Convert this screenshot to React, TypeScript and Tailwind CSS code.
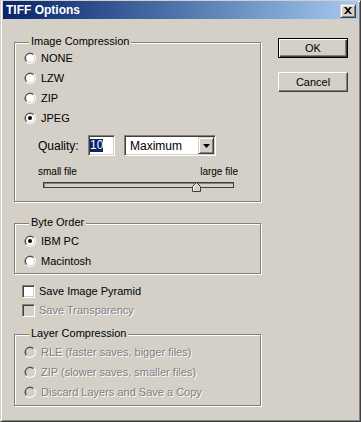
import { ReactNode } from 'react';

interface RadioProps {
    label: string;
    checked?: boolean;
    disabled?: boolean;
}

function RadioDot({ checked, disabled }: { checked?: boolean; disabled?: boolean }) {
    return (
        <svg width="12" height="12" viewBox="0 0 12 12" className="shrink-0">
            <circle cx="6" cy="6" r="6" fill="#ffffff" />
            <path d="M1.76 10.24 A6 6 0 0 1 10.24 1.76 Z" fill="#808080" />
            <circle cx="6" cy="6" r="5" fill="#d4d0c8" />
            <path d="M2.46 9.54 A5 5 0 0 1 9.54 2.46 Z" fill="#404040" />
            <circle cx="6" cy="6" r="4" fill={disabled ? '#d4d0c8' : '#ffffff'} />
            {checked && <circle cx="6" cy="6" r="2" fill="#000000" />}
        </svg>
    );
}

function Radio({ label, checked, disabled }: RadioProps) {
    return (
        <div className="flex h-[20px] items-center pl-[9px]">
            <RadioDot checked={checked} disabled={disabled} />
            <span
                className={
                    disabled
                        ? 'ml-[5px] leading-[13px] text-[#808080] [text-shadow:1px_1px_0_#fff]'
                        : 'ml-[5px] leading-[13px] text-black'
                }
            >
                {label}
            </span>
        </div>
    );
}

function Checkbox({ label, disabled }: { label: string; disabled?: boolean }) {
    return (
        <div className="flex h-[19px] items-center pl-[8px]">
            <div
                className={
                    disabled
                        ? 'h-[13px] w-[13px] shrink-0 border border-t-[#808080] border-l-[#808080] border-r-white border-b-white bg-[#d4d0c8] shadow-[inset_1px_1px_0_#404040,inset_-1px_-1px_0_#d4d0c8]'
                        : 'h-[13px] w-[13px] shrink-0 border border-t-[#808080] border-l-[#808080] border-r-white border-b-white bg-white shadow-[inset_1px_1px_0_#404040,inset_-1px_-1px_0_#d4d0c8]'
                }
            />
            <span
                className={
                    disabled
                        ? 'ml-[4px] leading-[13px] text-[#808080] [text-shadow:1px_1px_0_#fff]'
                        : 'ml-[4px] leading-[13px] text-black'
                }
            >
                {label}
            </span>
        </div>
    );
}

function GroupBox({ title, className, children }: { title: string; className: string; children: ReactNode }) {
    return (
        <div className={`relative border border-[#808080] shadow-[inset_1px_1px_0_#fff,1px_1px_0_#fff] ${className}`}>
            <span className="absolute left-[14px] -top-[8px] bg-[#d4d0c8] px-[2px] leading-[13px]">{title}</span>
            {children}
        </div>
    );
}

function App() {
    return (
        <div className="h-[422px] w-[361px] overflow-hidden border-t border-l border-r border-b border-t-[#d4d0c8] border-l-[#d4d0c8] border-r-[#404040] border-b-[#404040] bg-[#d4d0c8] font-['Liberation_Sans',Arial,sans-serif] text-[11px] text-black shadow-[inset_1px_1px_0_#fff,inset_-1px_-1px_0_#808080]">
            {/* title bar */}
            <div className="mx-[2px] flex h-[18px] items-center bg-linear-to-r from-[#0a246a] to-[#a6caf0]">
                <span className="flex-1 pl-[3px] text-[12px] font-bold leading-[18px] text-white">TIFF Options</span>
                <div className="mr-[2px] mt-[1px] flex h-[14px] w-[16px] items-center justify-center border border-t-[#d4d0c8] border-l-[#d4d0c8] border-r-[#404040] border-b-[#404040] bg-[#d4d0c8] shadow-[inset_1px_1px_0_#fff,inset_-1px_-1px_0_#808080]">
                    <svg width="8" height="7" viewBox="0 0 8 7">
                        <path d="M0 0 H2 L4 2 L6 0 H8 L5 3.5 L8 7 H6 L4 5 L2 7 H0 L3 3.5 Z" fill="#000" />
                    </svg>
                </div>
            </div>

            <div className="flex">
                {/* left column */}
                <div className="ml-[13px] mt-[23px] w-[248px]">
                    <GroupBox title="Image Compression" className="h-[160px] w-[247px] pt-[5px]">
                        <Radio label="NONE" />
                        <Radio label="LZW" />
                        <Radio label="ZIP" />
                        <Radio label="JPEG" checked />
                        <div className="mt-[7px] flex h-[21px] items-center pl-[23px] text-[12px]">
                            <span className="w-[50px] leading-[14px]">Quality:</span>
                            <div className="flex h-[21px] w-[27px] items-center border border-t-[#808080] border-l-[#808080] border-r-white border-b-white bg-white pl-[1px] shadow-[inset_1px_1px_0_#404040,inset_-1px_-1px_0_#d4d0c8]">
                                <span className="bg-[#0a246a] leading-[13px] text-white">10</span>
                            </div>
                            <div className="ml-[9px] flex h-[21px] w-[92px] items-center border border-t-[#808080] border-l-[#808080] border-r-white border-b-white bg-white shadow-[inset_1px_1px_0_#404040,inset_-1px_-1px_0_#d4d0c8]">
                                <span className="flex-1 pl-[5px] leading-[14px]">Maximum</span>
                                <div className="mr-[1px] flex h-[17px] w-[16px] items-center justify-center border border-t-[#d4d0c8] border-l-[#d4d0c8] border-r-[#404040] border-b-[#404040] bg-[#d4d0c8] shadow-[inset_1px_1px_0_#fff,inset_-1px_-1px_0_#808080]">
                                    <svg width="7" height="4" viewBox="0 0 7 4">
                                        <path d="M0 0 H7 L3.5 4 Z" fill="#000" />
                                    </svg>
                                </div>
                            </div>
                        </div>
                        <div className="mt-[10px] flex h-[12px] items-center justify-between pl-[23px] pr-[22px] text-[10px] leading-[12px]">
                            <span>small file</span>
                            <span>large file</span>
                        </div>
                        <div className="relative ml-[28px] mt-[4px] h-[6px] w-[191px] border border-t-[#404040] border-l-[#404040] border-r-[#404040] border-b-[#404040] bg-[#d4d0c8] shadow-[inset_1px_1px_0_#808080]">
                            <svg width="9" height="10" viewBox="0 0 9 10" className="absolute left-[148px] -top-[1px]">
                                <path d="M4.5 0.5 L8.5 4.5 V9.5 H0.5 V4.5 Z" fill="#d4d0c8" stroke="#404040" strokeWidth="1" />
                                <path d="M1.5 5 L4.5 2 M1.5 5 V8.5" stroke="#ffffff" strokeWidth="1" fill="none" />
                            </svg>
                        </div>
                    </GroupBox>

                    <GroupBox title="Byte Order" className="mt-[21px] h-[51px] w-[247px] pt-[7px]">
                        <Radio label="IBM PC" checked />
                        <Radio label="Macintosh" />
                    </GroupBox>

                    <div className="mt-[8px]">
                        <Checkbox label="Save Image Pyramid" />
                        <Checkbox label="Save Transparency" disabled />
                    </div>

                    <GroupBox title="Layer Compression" className="mt-[14px] h-[72px] w-[247px] pt-[7px]">
                        <Radio label="RLE (faster saves, bigger files)" disabled />
                        <Radio label="ZIP (slower saves, smaller files)" disabled />
                        <Radio label="Discard Layers and Save a Copy" disabled />
                    </GroupBox>
                </div>

                {/* right column */}
                <div className="ml-[16px] mt-[19px] flex w-[70px] flex-col">
                    <button className="flex h-[20px] w-[70px] items-center justify-center border border-black bg-[#d4d0c8] leading-[13px] shadow-[inset_1px_1px_0_#fff,inset_-1px_-1px_0_#404040,inset_-2px_-2px_0_#808080]">
                        OK
                    </button>
                    <button className="mt-[14px] flex h-[20px] w-[70px] items-center justify-center border border-t-white border-l-white border-r-[#404040] border-b-[#404040] bg-[#d4d0c8] leading-[13px] shadow-[inset_-1px_-1px_0_#808080]">
                        Cancel
                    </button>
                </div>
            </div>
        </div>
    );
}

export default App;
